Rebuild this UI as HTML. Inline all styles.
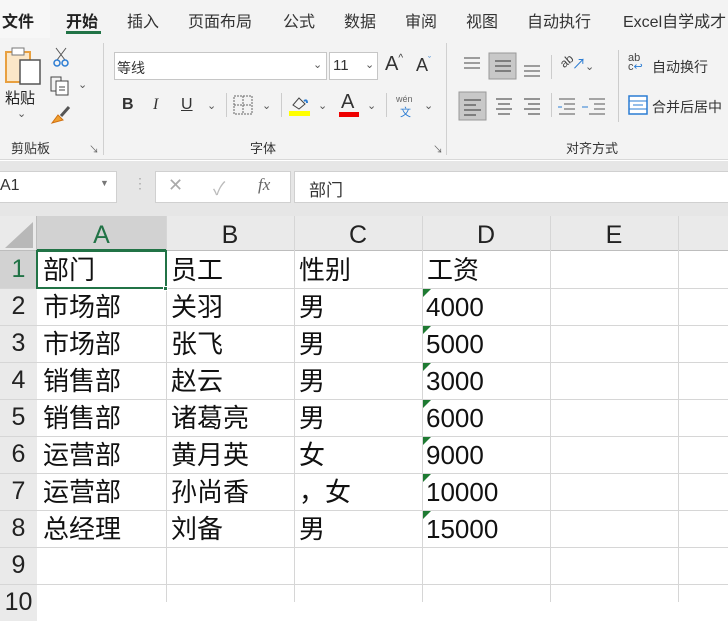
<!DOCTYPE html>
<html><head><meta charset="utf-8"><style>
*{margin:0;padding:0;box-sizing:border-box}
body{width:728px;height:602px;overflow:hidden;background:#fff;position:relative;font-family:"Liberation Sans","Noto Sans CJK SC",sans-serif;color:#222}
.a{position:absolute}
.t{position:absolute;white-space:nowrap}
.tab{top:8px;font-size:16px;color:#333}
.sm{font-size:13px;color:#333}
.cell{position:absolute;font-size:26px;line-height:37px;color:#111;white-space:nowrap}
.rh{position:absolute;left:0;width:37px;text-align:center;font-size:25px;line-height:37px;color:#222;background:#eaeaea}
.ch{position:absolute;top:216px;height:35px;text-align:center;font-size:25px;line-height:38px;color:#222}
.hl{position:absolute;left:0;width:728px;height:1px;background:#d6d6d6}
.vl{position:absolute;top:216px;height:386px;width:1px;background:#d6d6d6}
.tri{position:absolute;width:0;height:0;border-top:8px solid #1e7a32;border-right:8px solid transparent}
.chev{font-size:11px;color:#555}
</style></head><body>
<!-- top tabs -->
<div class="a" style="left:0;top:0;width:728px;height:38px;background:#f3f3f3"></div>
<div class="a" style="left:0;top:0;width:50px;height:38px;background:#f7f7f7"></div>
<div class="t tab" style="left:2px;font-weight:bold;color:#222">文件</div>
<div class="t tab" style="left:66px;font-weight:bold;color:#222">开始</div>
<div class="a" style="left:66px;top:31px;width:35px;height:3px;background:#217346"></div>
<div class="t tab" style="left:127px">插入</div>
<div class="t tab" style="left:188px">页面布局</div>
<div class="t tab" style="left:283px">公式</div>
<div class="t tab" style="left:344px">数据</div>
<div class="t tab" style="left:405px">审阅</div>
<div class="t tab" style="left:466px">视图</div>
<div class="t tab" style="left:527px">自动执行</div>
<div class="t tab" style="left:623px">Excel自学成才</div>
<!-- ribbon -->
<div class="a" style="left:0;top:38px;width:728px;height:122px;background:#f3f3f3;border-bottom:1px solid #d8d8d8"></div>
<!-- clipboard -->
<svg class="a" style="left:4px;top:46px" width="38" height="40"><rect x="2" y="6" width="24" height="30" fill="#fbe7c8" stroke="#e8a040" stroke-width="2"/><rect x="8" y="2" width="12" height="7" fill="#fff" stroke="#777"/><rect x="16" y="14" width="20" height="24" fill="#fff" stroke="#555" stroke-width="1.5"/></svg>
<div class="t" style="left:5px;top:87px;font-size:15px">粘贴</div>
<div class="t chev" style="left:17px;top:107px">⌄</div>
<svg class="a" style="left:52px;top:46px" width="18" height="22"><path d="M4 2 L13 14 M14 2 L5 14" stroke="#555" fill="none"/><circle cx="5" cy="17" r="3" stroke="#2b7cd3" fill="none" stroke-width="1.5"/><circle cx="13" cy="17" r="3" stroke="#2b7cd3" fill="none" stroke-width="1.5"/></svg>
<svg class="a" style="left:50px;top:76px" width="22" height="20"><rect x="1" y="1" width="10" height="14" fill="none" stroke="#444"/><rect x="6" y="5" width="12" height="14" fill="#fff" stroke="#444"/><path d="M9 11h6M9 14h6" stroke="#444"/></svg>
<div class="t chev" style="left:78px;top:78px">⌄</div>
<svg class="a" style="left:50px;top:104px" width="22" height="22"><path d="M2 19 L8 11 L13 16 Z" fill="#f0a030" stroke="#d07010"/><path d="M11 12 L19 3" stroke="#555" stroke-width="3"/></svg>
<div class="t sm" style="left:11px;top:138px">剪贴板</div>
<div class="t" style="left:89px;top:141px;font-size:10px;color:#666">↘</div>
<div class="a" style="left:103px;top:43px;width:1px;height:112px;background:#d0d0d0"></div>
<!-- font -->
<div class="a" style="left:114px;top:52px;width:213px;height:28px;background:#fff;border:1px solid #c6c6c6"></div>
<div class="t sm" style="left:117px;top:58px;font-size:14px">等线</div>
<div class="t chev" style="left:313px;top:58px">⌄</div>
<div class="a" style="left:329px;top:52px;width:49px;height:28px;background:#fff;border:1px solid #c6c6c6"></div>
<div class="t" style="left:333px;top:57px;font-size:15px;color:#333">11</div>
<div class="t chev" style="left:365px;top:58px">⌄</div>
<div class="t" style="left:385px;top:53px;font-size:20px;color:#333">A<span style="font-size:10px;vertical-align:top">^</span></div>
<div class="t" style="left:416px;top:55px;font-size:18px;color:#333">A<span style="font-size:9px;vertical-align:top;color:#2b7cd3">ˇ</span></div>
<div class="t" style="left:122px;top:96px;font-size:16px;font-weight:bold;color:#333">B</div>
<div class="t" style="left:153px;top:96px;font-size:16px;font-style:italic;font-family:'Liberation Serif',serif;color:#333">I</div>
<div class="t" style="left:181px;top:96px;font-size:16px;text-decoration:underline;color:#333">U</div>
<div class="t chev" style="left:207px;top:99px">⌄</div>
<div class="a" style="left:226px;top:93px;width:1px;height:24px;background:#ccc"></div>
<svg class="a" style="left:233px;top:95px" width="20" height="20"><rect x="1" y="1" width="18" height="18" fill="none" stroke="#666" stroke-dasharray="2 1"/><path d="M10 1v18M1 10h18" stroke="#666" stroke-dasharray="2 1"/></svg>
<div class="t chev" style="left:262px;top:99px">⌄</div>
<div class="a" style="left:281px;top:93px;width:1px;height:24px;background:#ccc"></div>
<svg class="a" style="left:289px;top:93px" width="22" height="24"><path d="M4 12 L10 5 L16 11 L10 16 Z" fill="none" stroke="#444"/><path d="M15 8 Q18 6 18 10" stroke="#2b7cd3" fill="none" stroke-width="2"/><rect x="0" y="18" width="21" height="5" fill="#ffff00"/></svg>
<div class="t chev" style="left:318px;top:99px">⌄</div>
<div class="t" style="left:341px;top:91px;font-size:20px;color:#333">A</div>
<div class="a" style="left:339px;top:112px;width:20px;height:5px;background:#e00"></div>
<div class="t chev" style="left:367px;top:99px">⌄</div>
<div class="a" style="left:386px;top:93px;width:1px;height:24px;background:#ccc"></div>
<div class="t" style="left:396px;top:94px;font-size:9px;color:#666">wén</div>
<div class="t" style="left:400px;top:104px;font-size:11px;color:#2b7cd3">文</div>
<div class="t chev" style="left:424px;top:99px">⌄</div>
<div class="t sm" style="left:250px;top:138px">字体</div>
<div class="t" style="left:433px;top:141px;font-size:10px;color:#666">↘</div>
<div class="a" style="left:446px;top:43px;width:1px;height:112px;background:#d0d0d0"></div>
<!-- alignment -->
<svg class="a" style="left:458px;top:52px" width="90" height="28"><g stroke="#444"><path d="M6 6h16M6 11h16M6 16h16"/></g><rect x="31" y="1" width="27" height="26" fill="#c8c8c8" stroke="#999"/><g stroke="#333"><path d="M37 9h16M37 14h16M37 19h16"/></g><g stroke="#444"><path d="M66 14h16M66 19h16M66 24h16"/></g></svg>
<div class="a" style="left:551px;top:55px;width:1px;height:24px;background:#ccc"></div>
<div class="t" style="left:560px;top:54px;font-size:12px;color:#444;transform:rotate(-40deg)">ab</div>
<div class="t" style="left:572px;top:54px;font-size:14px;color:#2b7cd3">↗</div>
<div class="t chev" style="left:585px;top:60px">⌄</div>
<div class="a" style="left:618px;top:50px;width:1px;height:72px;background:#ccc"></div>
<div class="t" style="left:628px;top:54px;font-size:11px;color:#444;line-height:9px">ab<br>c<span style="color:#2b7cd3">↩</span></div>
<div class="t" style="left:652px;top:57px;font-size:14px;color:#333">自动换行</div>
<svg class="a" style="left:458px;top:91px" width="160" height="30"><rect x="1" y="1" width="27" height="28" fill="#c8c8c8" stroke="#999"/><g stroke="#333"><path d="M6 9h17M6 14h12M6 19h17M6 24h12"/><path d="M38 8h16M40 13h12M38 18h16M40 23h12"/><path d="M66 8h16M70 13h12M66 18h16M70 23h12"/></g><g stroke="#555"><path d="M101 8h16M106 13h11M106 18h11M101 23h16M131 8h16M136 13h11M136 18h11M131 23h16"/></g><path d="M100 16h4M124 16h6" stroke="#2b7cd3"/></svg>
<div class="a" style="left:551px;top:93px;width:1px;height:24px;background:#ccc"></div>
<svg class="a" style="left:628px;top:95px" width="20" height="20"><rect x="1" y="1" width="18" height="18" fill="#fff" stroke="#2b7cd3" stroke-width="1.5"/><path d="M1 6h18M1 14h18M5 10h10" stroke="#2b7cd3"/></svg>
<div class="t" style="left:652px;top:97px;font-size:14px;color:#333">合并后居中</div>
<div class="t sm" style="left:566px;top:138px">对齐方式</div>
<!-- formula bar -->
<div class="a" style="left:0;top:161px;width:728px;height:55px;background:#e6e6e6"></div>
<div class="a" style="left:-1px;top:171px;width:118px;height:32px;background:#fff;border:1px solid #d0d0d0"></div>
<div class="t" style="left:0;top:177px;font-size:16px;color:#333">A1</div>
<div class="t" style="left:100px;top:178px;font-size:9px;color:#777">▼</div>
<div class="t" style="left:133px;top:175px;font-size:14px;color:#aaa">⋮</div>
<div class="a" style="left:155px;top:171px;width:136px;height:32px;background:#fff;border:1px solid #d0d0d0"></div>
<div class="t" style="left:168px;top:175px;font-size:18px;color:#aaa">✕</div>
<div class="t" style="left:213px;top:175px;font-size:18px;color:#bbb">✓</div>
<div class="t" style="left:258px;top:175px;font-size:17px;font-style:italic;font-family:'Liberation Serif',serif;color:#666">fx</div>
<div class="a" style="left:294px;top:171px;width:440px;height:32px;background:#fff;border:1px solid #d0d0d0"></div>
<div class="t" style="left:309px;top:176px;font-size:17px;color:#333">部门</div>
<!-- headers -->
<div class="a" style="left:0;top:216px;width:728px;height:35px;background:#eaeaea"></div>
<div class="a" style="left:0;top:251px;width:37px;height:351px;background:#eaeaea"></div>
<svg class="a" style="left:0;top:216px" width="37" height="35"><path d="M5 32 L33 32 L33 6 Z" fill="#b8b8b8"/></svg>
<div class="a" style="left:37px;top:216px;width:129px;height:35px;background:#d2d2d2;border-bottom:2px solid #217346"></div>
<div class="rh" style="top:251px;background:#d2d2d2;color:#217346">1</div>
<div class="a" style="left:0;top:250px;width:728px;height:1px;background:#bdbdbd"></div>
<div class="a" style="left:36px;top:216px;width:1px;height:386px;background:#bdbdbd"></div>
<div class="ch" style="left:37px;width:129px;color:#217346">A</div>
<div class="ch" style="left:166px;width:128px">B</div>
<div class="ch" style="left:294px;width:128px">C</div>
<div class="ch" style="left:422px;width:128px">D</div>
<div class="ch" style="left:550px;width:128px">E</div>
<div class="rh" style="top:288px">2</div><div class="rh" style="top:325px">3</div><div class="rh" style="top:362px">4</div><div class="rh" style="top:399px">5</div><div class="rh" style="top:436px">6</div><div class="rh" style="top:473px">7</div><div class="rh" style="top:510px">8</div><div class="rh" style="top:547px">9</div><div class="rh" style="top:584px">10</div>
<!-- grid -->
<div class="hl" style="top:288px"></div><div class="hl" style="top:325px"></div><div class="hl" style="top:362px"></div><div class="hl" style="top:399px"></div><div class="hl" style="top:436px"></div><div class="hl" style="top:473px"></div><div class="hl" style="top:510px"></div><div class="hl" style="top:547px"></div><div class="hl" style="top:584px"></div>
<div class="vl" style="left:166px"></div><div class="vl" style="left:294px"></div><div class="vl" style="left:422px"></div><div class="vl" style="left:550px"></div><div class="vl" style="left:678px"></div>
<div class="a" style="left:36px;top:250px;width:131px;height:39px;border:2px solid #217346"></div>
<div class="a" style="left:163px;top:286px;width:5px;height:5px;background:#217346;border:1px solid #fff"></div>
<!-- cells -->
<div class="cell" style="left:43px;top:252px">部门</div><div class="cell" style="left:171px;top:252px">员工</div><div class="cell" style="left:299px;top:252px">性别</div><div class="cell" style="left:427px;top:252px">工资</div>
<div class="cell" style="left:43px;top:289px">市场部</div><div class="cell" style="left:171px;top:289px">关羽</div><div class="cell" style="left:299px;top:289px">男</div><div class="cell" style="left:426px;top:289px">4000</div>
<div class="cell" style="left:43px;top:326px">市场部</div><div class="cell" style="left:171px;top:326px">张飞</div><div class="cell" style="left:299px;top:326px">男</div><div class="cell" style="left:426px;top:326px">5000</div>
<div class="cell" style="left:43px;top:363px">销售部</div><div class="cell" style="left:171px;top:363px">赵云</div><div class="cell" style="left:299px;top:363px">男</div><div class="cell" style="left:426px;top:363px">3000</div>
<div class="cell" style="left:43px;top:400px">销售部</div><div class="cell" style="left:171px;top:400px">诸葛亮</div><div class="cell" style="left:299px;top:400px">男</div><div class="cell" style="left:426px;top:400px">6000</div>
<div class="cell" style="left:43px;top:437px">运营部</div><div class="cell" style="left:171px;top:437px">黄月英</div><div class="cell" style="left:299px;top:437px">女</div><div class="cell" style="left:426px;top:437px">9000</div>
<div class="cell" style="left:43px;top:474px">运营部</div><div class="cell" style="left:171px;top:474px">孙尚香</div><div class="cell" style="left:299px;top:474px">，女</div><div class="cell" style="left:426px;top:474px">10000</div>
<div class="cell" style="left:43px;top:511px">总经理</div><div class="cell" style="left:171px;top:511px">刘备</div><div class="cell" style="left:299px;top:511px">男</div><div class="cell" style="left:426px;top:511px">15000</div>
<div class="tri" style="left:423px;top:289px"></div><div class="tri" style="left:423px;top:326px"></div><div class="tri" style="left:423px;top:363px"></div><div class="tri" style="left:423px;top:400px"></div><div class="tri" style="left:423px;top:437px"></div><div class="tri" style="left:423px;top:474px"></div><div class="tri" style="left:423px;top:511px"></div>
</body></html>
